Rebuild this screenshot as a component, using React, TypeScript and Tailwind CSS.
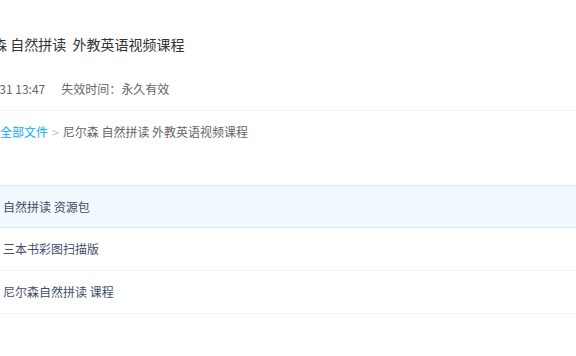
const rows = ['自然拼读 资源包', '三本书彩图扫描版', '尼尔森自然拼读 课程']

export default function App() {
  return (
    <div
      className="w-[576px] h-[356px] overflow-hidden bg-white text-[#333]"
      style={{ fontFamily: '"Microsoft YaHei", "Noto Sans CJK SC", "Noto Sans", sans-serif' }}
    >
      <div className="pt-[33px]">
        <h1 className="-ml-[35px] text-[14px] leading-[22px] font-normal text-[#333] whitespace-pre">
          尼尔森 自然拼读  外教英语视频课程
        </h1>
        <div className="mt-[25px] flex text-[12px] leading-[18px] text-[#666] whitespace-nowrap">
          <span className="-ml-[109px]">分享时间：2019-10-31 13:47</span>
          <span className="ml-[16px]">失效时间：永久有效</span>
        </div>
      </div>
      <div className="mt-[12px] border-t border-[#f2f2f2]" />
      <div className="mt-[12px] flex items-center text-[12px] leading-[18px] whitespace-nowrap">
        <span className="text-[#09aaff]">全部文件</span>
        <span className="mx-[4px] text-[#c4c4c4]">&gt;</span>
        <span className="text-[#666]">尼尔森 自然拼读 外教英语视频课程</span>
      </div>
      <div className="mt-[44px]">
        {rows.map((r, i) => (
          <div
            key={r}
            className={`h-[43px] flex items-center pl-[3px] text-[12px] text-[#424e67] border-b ${
              i === 0 ? 'bg-[#f1f8fe] border-y border-[#d9ebf9]' : 'border-[#f0f4fa]'
            }`}
          >
            {r}
          </div>
        ))}
      </div>
    </div>
  )
}
